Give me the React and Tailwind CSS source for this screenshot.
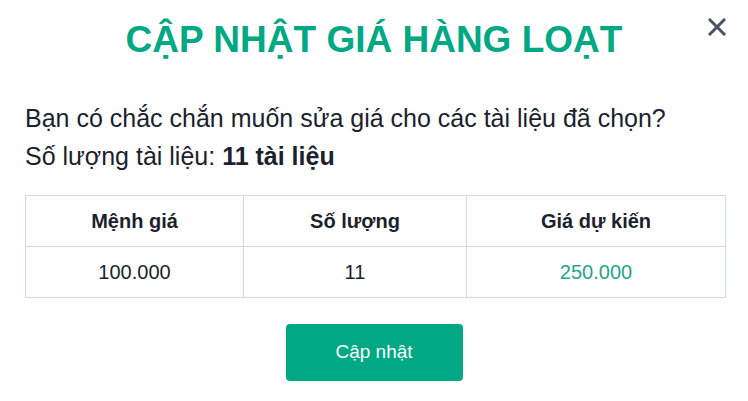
import React from "react";

const rows = [{ price: "100.000", qty: "11", total: "250.000" }];

const CloseIcon = () => (
  <svg viewBox="0 0 18 18" className="w-[18px] h-[18px]" fill="none" stroke="#4a5365" strokeWidth="3" strokeLinecap="square">
    <path d="M2 2L16 16M16 2L2 16" />
  </svg>
);

export default function App() {
  return (
    <div className="relative w-[748px] h-[401px] bg-white px-[25px] font-['Liberation_Sans',Arial,sans-serif] text-[#1c1f2e]">
      <button className="absolute top-[18px] right-[22px] cursor-pointer">
        <CloseIcon />
      </button>

      {/* Title */}
      <h2 className="pt-[13px] text-center text-[37px] leading-[54px] font-bold text-[#00a884]">
        CẬP NHẬT GIÁ HÀNG LOẠT
      </h2>

      <div className="mt-[33px] text-[25px] leading-[37.5px]">
        <p>Bạn có chắc chắn muốn sửa giá cho các tài liệu đã chọn?</p>
        <p>
          Số lượng tài liệu: <span className="font-bold">11 tài liệu</span>
        </p>
      </div>

      <table className="mt-[20px] w-[700px] table-fixed border-collapse text-[20px] leading-[30px]">
        <colgroup>
          <col className="w-[218px]" />
          <col className="w-[223px]" />
          <col className="w-[259px]" />
        </colgroup>
        <thead>
          <tr>
            <th className="border border-[#cfd8e3] py-[10px] font-bold">Mệnh giá</th>
            <th className="border border-[#cfd8e3] py-[10px] font-bold">Số lượng</th>
            <th className="border border-[#cfd8e3] py-[10px] font-bold">Giá dự kiến</th>
          </tr>
        </thead>
        <tbody>
          {rows.map((r, i) => (
            <tr key={i}>
              <td className="border border-[#cfd8e3] py-[10px] text-center">{r.price}</td>
              <td className="border border-[#cfd8e3] py-[10px] text-center">{r.qty}</td>
              <td className="border border-[#cfd8e3] py-[10px] text-center text-[#1fa48a]">{r.total}</td>
            </tr>
          ))}
        </tbody>
      </table>

      <div className="mt-[26px] flex justify-center">
        <button className="w-[177px] h-[57px] rounded-[4px] bg-[#00a884] text-white text-[19px]">
          Cập nhật
        </button>
      </div>
    </div>
  );
}
